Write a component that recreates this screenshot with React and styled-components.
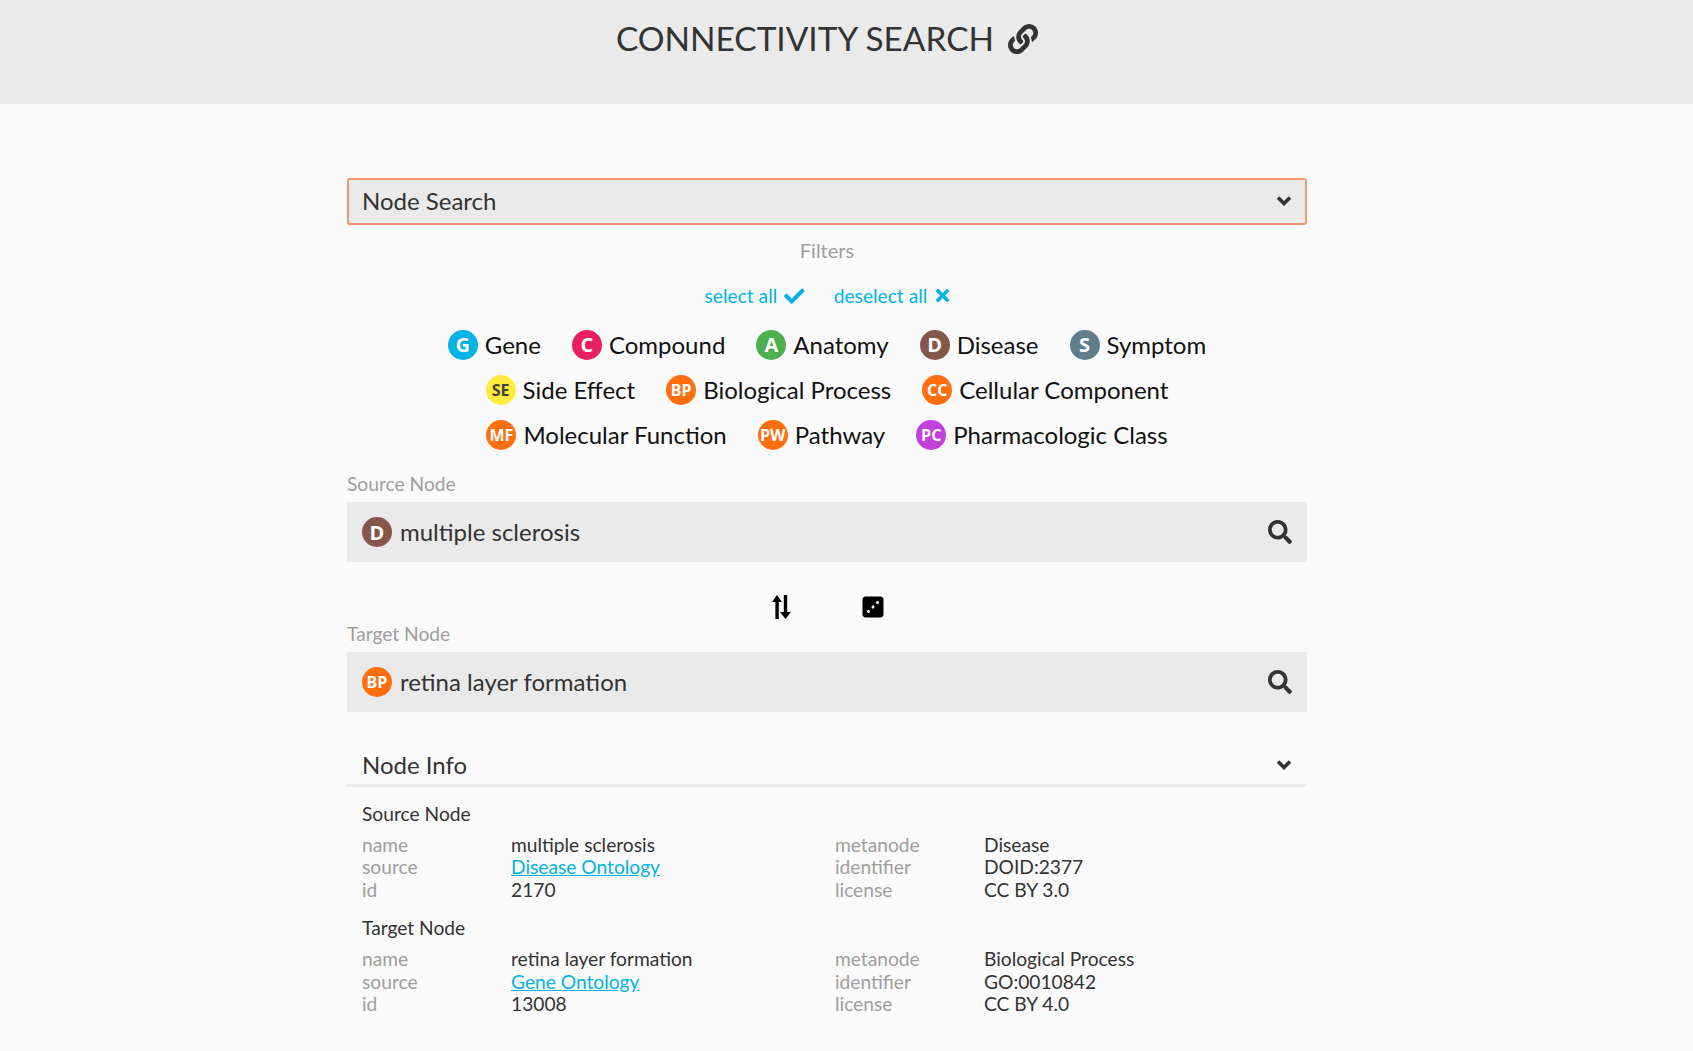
import React from 'react'
import styled, { createGlobalStyle } from 'styled-components'
import { FaLink, FaCheck, FaTimes, FaSearch, FaDiceThree } from 'react-icons/fa'

const nodeColors = {
  G: ['#02b3e4', '#fff'],
  C: ['#e91e63', '#fff'],
  A: ['#4caf50', '#fff'],
  D: ['#85574a', '#fff'],
  S: ['#607d8b', '#fff'],
  SE: ['#ffeb3b', '#424242'],
  BP: ['#ff6f0f', '#fff'],
  CC: ['#ff6f0f', '#fff'],
  MF: ['#ff6f0f', '#fff'],
  PW: ['#ff6f0f', '#fff'],
  PC: ['#c341d8', '#fff'],
}

const filters = [
  ['G', 'Gene'],
  ['C', 'Compound'],
  ['A', 'Anatomy'],
  ['D', 'Disease'],
  ['S', 'Symptom'],
  ['SE', 'Side Effect'],
  ['BP', 'Biological Process'],
  ['CC', 'Cellular Component'],
  ['MF', 'Molecular Function'],
  ['PW', 'Pathway'],
  ['PC', 'Pharmacologic Class'],
]

const sourceInfo = [
  ['name', 'multiple sclerosis'],
  ['metanode', 'Disease'],
  ['source', 'Disease Ontology', true],
  ['identifier', 'DOID:2377'],
  ['id', '2170'],
  ['license', 'CC BY 3.0'],
]

const targetInfo = [
  ['name', 'retina layer formation'],
  ['metanode', 'Biological Process'],
  ['source', 'Gene Ontology', true],
  ['identifier', 'GO:0010842'],
  ['id', '13008'],
  ['license', 'CC BY 4.0'],
]

const GlobalStyle = createGlobalStyle`
  * { box-sizing: border-box; }
  html, body { margin: 0; padding: 0; background: #fafafa; }
  body { font-family: Lato, "Open Sans", sans-serif; color: #333; }
`

const Header = styled.header`
  height: 104px;
  background: #eaeaea;
  padding: 18px 39px 0 0;
  display: flex;
  justify-content: center;
  align-items: flex-start;
  gap: 14px;
`
const Title = styled.h1`
  margin: 0;
  font-size: 33.4px;
  line-height: 41px;
  font-weight: 400;
  color: #333;
`
const TitleIcon = styled(FaLink)`
  font-size: 30px;
  margin-top: 6px;
`
const Main = styled.main`
  padding-right: 39px;
`
const Column = styled.div`
  width: 960px;
  margin: 0 auto;
  padding: 74px 0 36px;
`
const SectionSelect = styled.div`
  height: 47px;
  background: #eaeaea;
  border: 2px solid #f4956f;
  border-radius: 3px;
  padding: 0 13px 2px;
  display: flex;
  align-items: center;
  justify-content: space-between;
  font-size: 24px;
`
const ChevronSvg = styled.svg`
  width: 16px;
  height: 11px;
  fill: none;
  stroke: #333;
  stroke-width: 3.6;
`
const FiltersLabel = styled.div`
  margin-top: 13px;
  text-align: center;
  font-size: 20px;
  line-height: 24px;
  color: #9e9e9e;
`
const SelectRow = styled.div`
  margin-top: 22px;
  padding-left: 3px;
  display: flex;
  justify-content: center;
  gap: 29px;
  font-size: 19.2px;
  line-height: 24px;
  color: #02b3e4;
`
const SelectLink = styled.span`
  display: inline-flex;
  align-items: center;
  gap: ${p => p.$gap}px;
`
const CheckIcon = styled(FaCheck)`
  font-size: 20.5px;
`
const FilterList = styled.div`
  width: 800px;
  margin: 14px auto 0;
  display: flex;
  flex-wrap: wrap;
  justify-content: center;
  column-gap: 31px;
`
const FilterItem = styled.div`
  height: 45px;
  display: flex;
  align-items: center;
  gap: 7px;
  font-size: 24px;
  color: #111;
`
const NodeCircle = styled.span`
  flex: none;
  width: 30px;
  height: 30px;
  border-radius: 50%;
  display: flex;
  align-items: center;
  justify-content: center;
  background: ${p => nodeColors[p.$kind][0]};
  color: ${p => nodeColors[p.$kind][1]};
  font-family: "Open Sans", sans-serif;
  font-weight: 700;
  font-size: ${p => (p.$kind.length > 1 ? 16 : 20)}px;
`
const FieldLabel = styled.div`
  margin-top: ${p => p.$top}px;
  font-size: 19.2px;
  line-height: 24px;
  color: #9e9e9e;
`
const NodeInput = styled.div`
  height: 60px;
  margin-top: 6px;
  padding: 0 15px;
  background: #eaeaea;
  display: flex;
  align-items: center;
  gap: 8px;
  font-size: 24px;
`
const InputText = styled.span`
  flex: 1;
  padding-bottom: 2px;
`
const SearchIcon = styled(FaSearch)`
  font-size: 24px;
  color: #333;
`
const SwapRow = styled.div`
  height: 60px;
  display: flex;
  align-items: flex-start;
  justify-content: center;
  gap: 69px;
  padding: 33px 0 0 2px;
  color: #000;
`
const SwapIcon = styled.svg`
  width: 21px;
  height: 24px;
`
const DiceIcon = styled(FaDiceThree)`
  font-size: 24px;
  transform: scaleX(-1);
`
const InfoHeader = styled.div`
  height: 49px;
  margin-top: 26px;
  padding: 6px 15px 0;
  border-bottom: 3px solid #eaeaea;
  display: flex;
  align-items: center;
  justify-content: space-between;
  font-size: 24px;
`
const InfoBody = styled.div`
  padding: 15px 15px 0;
`
const InfoTitle = styled.div`
  font-size: 19.2px;
  line-height: 24px;
  margin-bottom: 7.5px;
  color: #333;
`
const InfoGrid = styled.div`
  display: grid;
  grid-template-columns: 149px 324px 149px 1fr;
  font-size: 19.2px;
  line-height: 22.8px;
  margin-bottom: 14.5px;
`
const InfoKey = styled.div`
  color: #9e9e9e;
`
const InfoValue = styled.div`
  color: #333;
`
const InfoLink = styled.a`
  color: #02b3e4;
  text-decoration: underline;
`

const Chevron = () => (
  <ChevronSvg viewBox="0 0 16 11">
    <path d="M2 2.500 8 8.500 14 2.500" />
  </ChevronSvg>
)

const InfoTable = ({ title, rows }) => (
  <>
    <InfoTitle>{title}</InfoTitle>
    <InfoGrid>
      {rows.map(([key, value, isLink]) => (
        <React.Fragment key={key}>
          <InfoKey>{key}</InfoKey>
          <InfoValue>{isLink ? <InfoLink href="#">{value}</InfoLink> : value}</InfoValue>
        </React.Fragment>
      ))}
    </InfoGrid>
  </>
)

const App = () => (
  <>
    <GlobalStyle />
    <Header>
      <Title>CONNECTIVITY SEARCH</Title>
      <TitleIcon />
    </Header>
    <Main>
      <Column>
        <SectionSelect>
          Node Search
          <Chevron />
        </SectionSelect>
        <FiltersLabel>Filters</FiltersLabel>
        <SelectRow>
          <SelectLink $gap={7}>select all <CheckIcon /></SelectLink>
          <SelectLink $gap={6}>deselect all <FaTimes /></SelectLink>
        </SelectRow>
        <FilterList>
          {filters.map(([kind, name]) => (
            <FilterItem key={kind}>
              <NodeCircle $kind={kind}>{kind}</NodeCircle>
              {name}
            </FilterItem>
          ))}
        </FilterList>
        <FieldLabel $top={15}>Source Node</FieldLabel>
        <NodeInput>
          <NodeCircle $kind="D">D</NodeCircle>
          <InputText>multiple sclerosis</InputText>
          <SearchIcon />
        </NodeInput>
        <SwapRow>
          <SwapIcon viewBox="0 0 21 24" fill="currentColor">
            <path d="M6 0 11 7H7.800V24H4.400V7H1Z" />
            <path d="M12.800 0h3.400v17H20l-5.500 7L9 17h3.800Z" />
          </SwapIcon>
          <DiceIcon />
        </SwapRow>
        <FieldLabel $top={0}>Target Node</FieldLabel>
        <NodeInput>
          <NodeCircle $kind="BP">BP</NodeCircle>
          <InputText>retina layer formation</InputText>
          <SearchIcon />
        </NodeInput>
        <InfoHeader>
          Node Info
          <Chevron />
        </InfoHeader>
        <InfoBody>
          <InfoTable title="Source Node" rows={sourceInfo} />
          <InfoTable title="Target Node" rows={targetInfo} />
        </InfoBody>
      </Column>
    </Main>
  </>
)

export default App
